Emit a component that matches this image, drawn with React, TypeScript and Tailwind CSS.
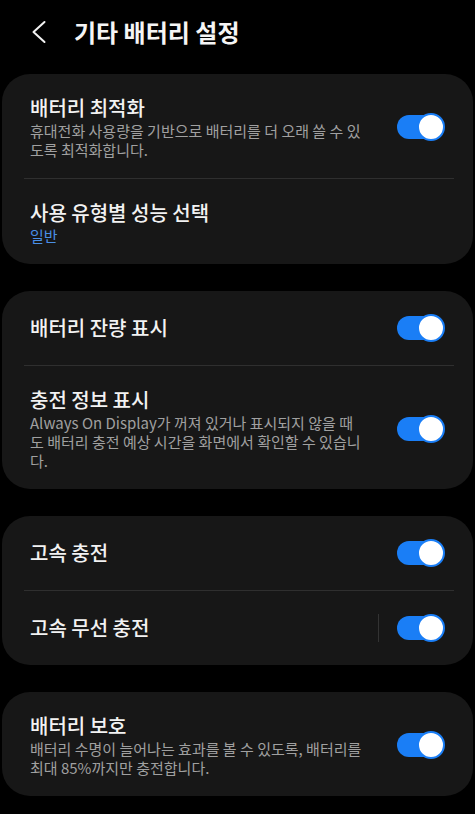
import React from "react";

const font = { fontFamily: '"Noto Sans CJK KR", "Noto Sans", sans-serif' };

function Toggle() {
  return (
    <div className="relative w-[48px] h-[30px] shrink-0">
      <div className="absolute left-0 top-[3px] w-[44px] h-[24px] rounded-full bg-[#1a7ef6]" />
      <div className="absolute right-0 top-[1px] w-[28px] h-[28px] rounded-full bg-white border-[2px] border-[#1a7ef6]" />
    </div>
  );
}

function Divider() {
  return <div className="h-px bg-[#2f2f2f] ml-[22px] mr-[19px]" />;
}

function Row({
  title,
  sub,
  subBlue,
  toggle = true,
  vline = false,
}: {
  title: string;
  sub?: string[];
  subBlue?: string;
  toggle?: boolean;
  vline?: boolean;
}) {
  const multi = !!(sub || subBlue);
  return (
    <div
      className={`flex items-center px-[28px] ${multi ? "pt-[21px] pb-[19px]" : "h-[74px]"}`}
    >
      <div className="flex-1 min-w-0 pr-[20px]">
        <div className="h-[26px] flex items-center text-[20px] leading-[26px] font-medium text-[#f2f2f2] whitespace-nowrap">
          {title}
        </div>
        {sub && (
          <div className="text-[15px] text-[#a0a0a0]">
            {sub.map((l, i) => (
              <div key={i} className="h-[19px] leading-[19px] whitespace-nowrap">
                {l}
              </div>
            ))}
          </div>
        )}
        {subBlue && (
          <div className="h-[19px] leading-[19px] text-[15px] text-[#4a8fe6]">{subBlue}</div>
        )}
      </div>
      {vline && <div className="w-px h-[28px] bg-[#333333] mr-[18px] shrink-0" />}
      {toggle && <Toggle />}
    </div>
  );
}

function Card({ children }: { children: React.ReactNode }) {
  return <div className="mx-[2px] rounded-[28px] bg-[#171717]">{children}</div>;
}

export default function App() {
  return (
    <div className="w-[475px] h-[814px] bg-black overflow-hidden" style={font}>
      <div className="h-[64px] flex items-center">
        <svg className="ml-[31px]" width="16" height="24" viewBox="0 0 16 24" fill="none">
          <path d="M13.5 2 L2.5 12 L13.5 22" stroke="#f2f2f2" strokeWidth="2" strokeLinecap="round" strokeLinejoin="round" />
        </svg>
        <div className="ml-[27px] text-[24px] font-bold text-[#f5f5f5] leading-[30px]">기타 배터리 설정</div>
      </div>
      <div className="pt-[10px] flex flex-col gap-[27px]">
        <Card>
          <Row title="배터리 최적화" sub={["휴대전화 사용량을 기반으로 배터리를 더 오래 쓸 수 있", "도록 최적화합니다."]} />
          <Divider />
          <Row title="사용 유형별 성능 선택" subBlue="일반" toggle={false} />
        </Card>
        <Card>
          <Row title="배터리 잔량 표시" />
          <Divider />
          <Row
            title="충전 정보 표시"
            sub={[
              "Always On Display가 꺼져 있거나 표시되지 않을 때",
              "도 배터리 충전 예상 시간을 화면에서 확인할 수 있습니",
              "다.",
            ]}
          />
        </Card>
        <Card>
          <Row title="고속 충전" />
          <Divider />
          <Row title="고속 무선 충전" vline />
        </Card>
        <Card>
          <Row title="배터리 보호" sub={["배터리 수명이 늘어나는 효과를 볼 수 있도록, 배터리를", "최대 85%까지만 충전합니다."]} />
        </Card>
      </div>
    </div>
  );
}
